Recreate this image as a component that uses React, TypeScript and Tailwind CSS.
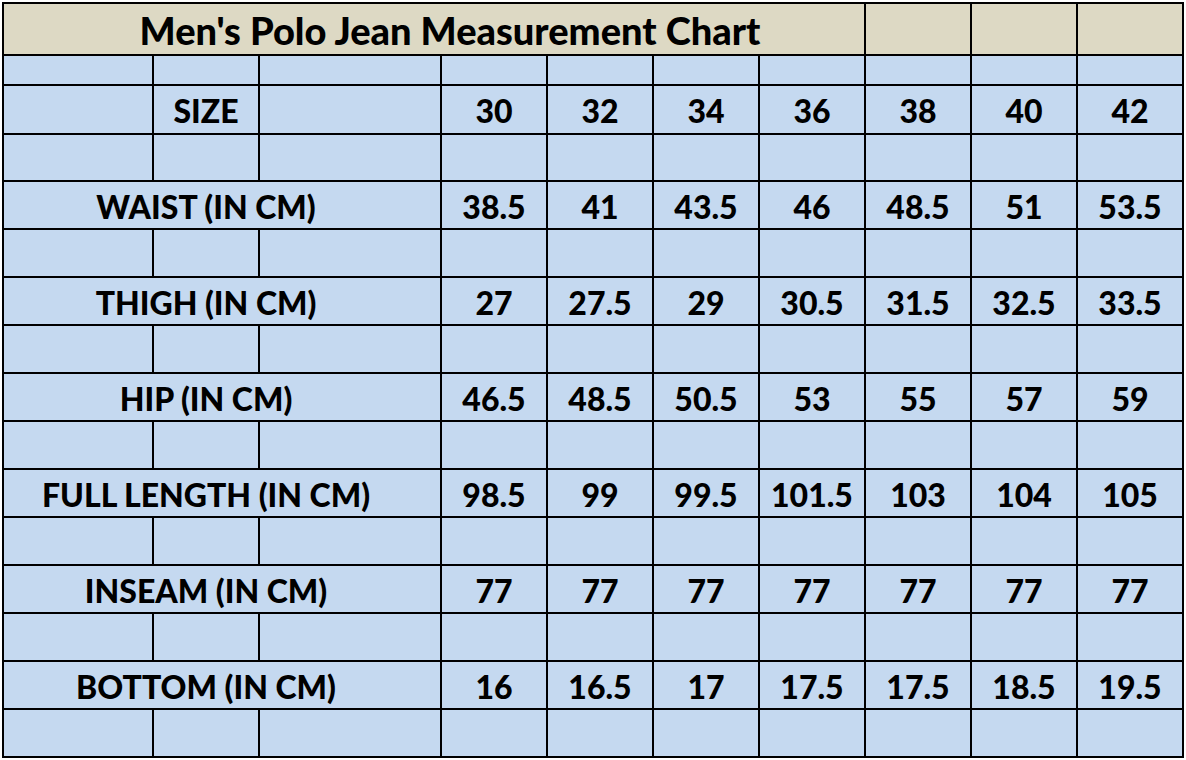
const SIZES = ['30', '32', '34', '36', '38', '40', '42'];

const ROWS: { label: string; values: string[] }[] = [
  { label: 'WAIST (IN CM)',       values: ['38.5', '41', '43.5', '46', '48.5', '51', '53.5'] },
  { label: 'THIGH (IN CM)',       values: ['27', '27.5', '29', '30.5', '31.5', '32.5', '33.5'] },
  { label: 'HIP (IN CM)',         values: ['46.5', '48.5', '50.5', '53', '55', '57', '59'] },
  { label: 'FULL LENGTH (IN CM)', values: ['98.5', '99', '99.5', '101.5', '103', '104', '105'] },
  { label: 'INSEAM (IN CM)',      values: ['77', '77', '77', '77', '77', '77', '77'] },
  { label: 'BOTTOM (IN CM)',      values: ['16', '16.5', '17', '17.5', '17.5', '18.5', '19.5'] },
];

const BLUE = 'bg-[#c5d9f0]';
const TEXT = 'text-[32px] font-black text-black';

function Blank() {
  return (
    <>
      {Array.from({ length: 10 }).map((_, i) => (
        <div key={i} className={BLUE} />
      ))}
    </>
  );
}

function Num({ v }: { v: string }) {
  return (
    <div className={`${BLUE} ${TEXT} flex items-center justify-center pt-[3px]`}>
      {v}
    </div>
  );
}

export default function App() {
  return (
    <div
      className="min-h-[760px] w-[1186px] bg-white p-[2px]"
      style={{ fontFamily: 'Lato, "Open Sans", sans-serif' }}
    >
      <div
        className="grid w-[1182px] gap-[2px] border-2 border-black bg-black leading-none"
        style={{
          gridTemplateColumns: '148px 104px 180px repeat(7, 104px)',
          gridTemplateRows: '50px 28px 47px 45px repeat(12, 46px)',
        }}
      >
        {/* title row */}
        <div className="col-span-7 flex items-center justify-center bg-[#ddd9c4] pl-[32px] pt-[2px] text-[38px] font-black text-black">
          Men's Polo Jean Measurement Chart
        </div>
        <div className="bg-[#ddd9c4]" />
        <div className="bg-[#ddd9c4]" />
        <div className="bg-[#ddd9c4]" />

        <Blank />

        {/* size row */}
        <div className={BLUE} />
        <div className={`${BLUE} ${TEXT} flex items-center justify-center pt-[3px]`}>SIZE</div>
        <div className={BLUE} />
        {SIZES.map((s) => (
          <Num key={s} v={s} />
        ))}

        <Blank />

        {ROWS.map((r) => (
          <div key={r.label} className="contents">
            <div className={`${BLUE} col-span-3 flex items-center pt-[3px]`}>
              <div className={`${TEXT} ml-[150px] flex w-[104px] justify-center whitespace-nowrap`}>
                {r.label}
              </div>
            </div>
            {r.values.map((v, i) => (
              <Num key={i} v={v} />
            ))}
            <Blank />
          </div>
        ))}
      </div>
    </div>
  );
}
